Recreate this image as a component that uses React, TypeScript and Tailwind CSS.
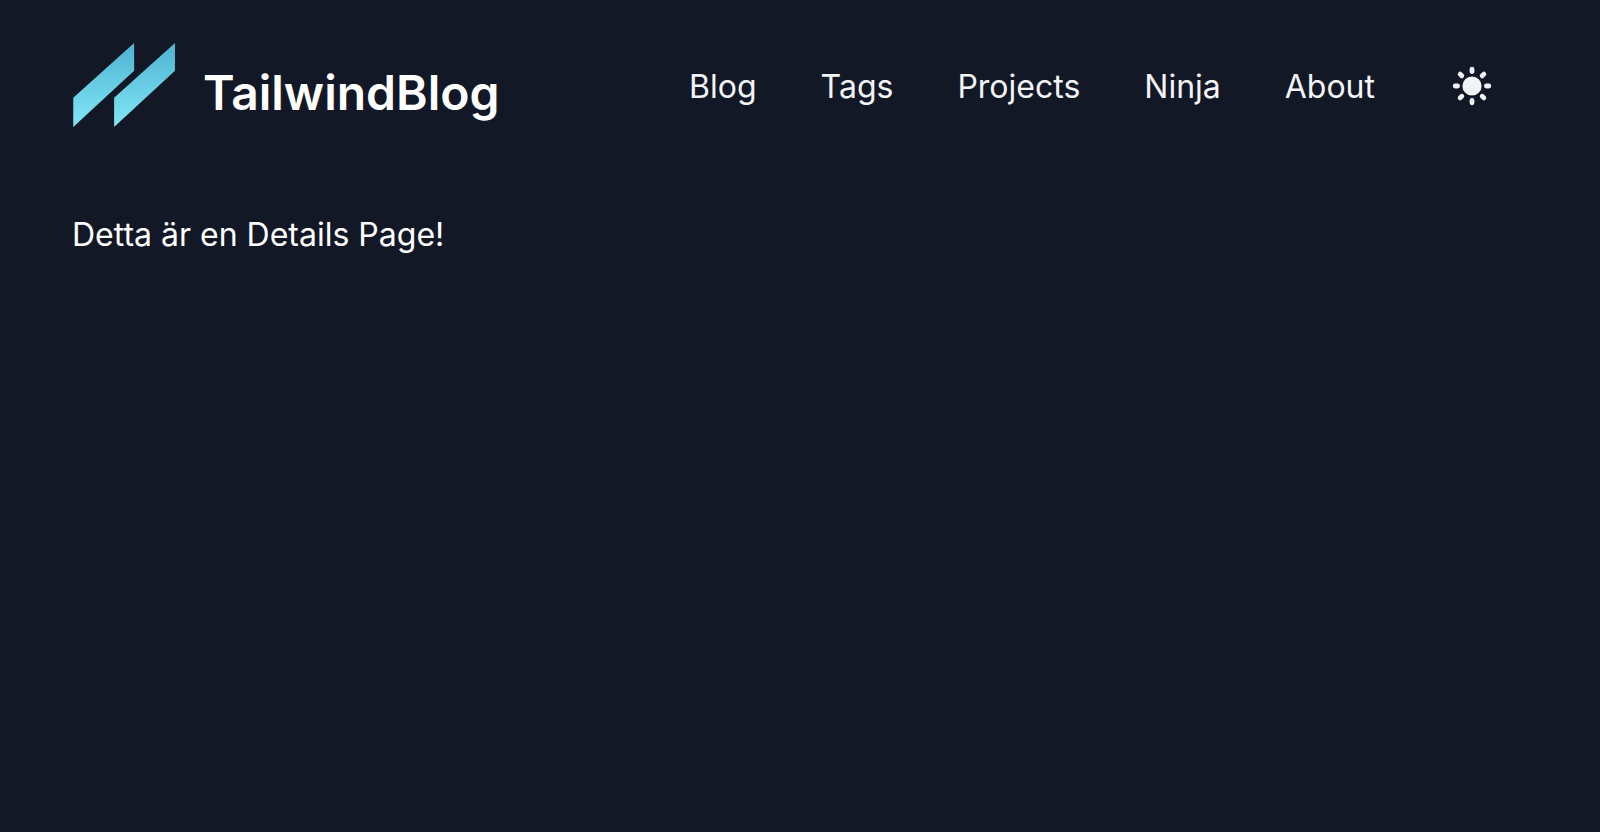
import React from 'react';

const links = ['Blog', 'Tags', 'Projects', 'Ninja', 'About'];

function Logo() {
  return (
    <svg viewBox="344.564 330.278 111.737 91.218" width="107" height="87" aria-hidden="true">
      <defs>
        <linearGradient id="logo-gradient" x1="420.97" y1="331" x2="420.97" y2="418.5" gradientUnits="userSpaceOnUse">
          <stop offset="0" stopColor="#4FB3D2" />
          <stop offset="1" stopColor="#80E6F5" />
        </linearGradient>
      </defs>
      <path
        d="M452.3 331.278v29.2l-63.8 58.87v-30.5zM409.5 331.278v29.2l-63.84 58.87v-30.5z"
        fill="url(#logo-gradient)"
      />
    </svg>
  );
}

function Sun() {
  return (
    <svg viewBox="0 0 20 20" className="size-12" fill="currentColor" aria-hidden="true">
      <path
        fillRule="evenodd"
        clipRule="evenodd"
        d="M10 2a1 1 0 011 1v1a1 1 0 11-2 0V3a1 1 0 011-1zm4 8a4 4 0 11-8 0 4 4 0 018 0zm-.464 4.95l.707.707a1 1 0 001.414-1.414l-.707-.707a1 1 0 00-1.414 1.414zm2.12-10.607a1 1 0 010 1.414l-.706.707a1 1 0 11-1.414-1.414l.707-.707a1 1 0 011.414 0zM17 11a1 1 0 100-2h-1a1 1 0 100 2h1zm-7 4a1 1 0 011 1v1a1 1 0 11-2 0v-1a1 1 0 011-1zM5.05 6.464A1 1 0 106.465 5.05l-.708-.707a1 1 0 00-1.414 1.414l.707.707zm1.414 8.486l-.707.707a1 1 0 01-1.414-1.414l.707-.707a1 1 0 011.414 1.414zM4 11a1 1 0 100-2H3a1 1 0 000 2h1z"
      />
    </svg>
  );
}

export default function App() {
  return (
    <div className="min-h-screen bg-[#121826] px-18 font-['Inter',sans-serif] text-white">
      <header className="flex items-center justify-between pt-[31px] pr-6 pb-17">
        <a href="#home" className="flex items-start gap-6 self-start pt-[11px]">
          <Logo />
          <span className="pt-[27px] text-5xl font-semibold">TailwindBlog</span>
        </a>
        <div className="flex items-center text-gray-100">
          <nav className="flex">
            {links.map((name) => (
              <a key={name} href={'#' + name.toLowerCase()} className="p-8 text-[32px] leading-12">
                {name}
              </a>
            ))}
          </nav>
          <button type="button" aria-label="Toggle dark mode" className="mb-0.5 ml-[33px] p-2">
            <Sun />
          </button>
        </div>
      </header>
      <main>
        <p className="text-[32px] leading-12">Detta är en Details Page!</p>
      </main>
    </div>
  );
}
